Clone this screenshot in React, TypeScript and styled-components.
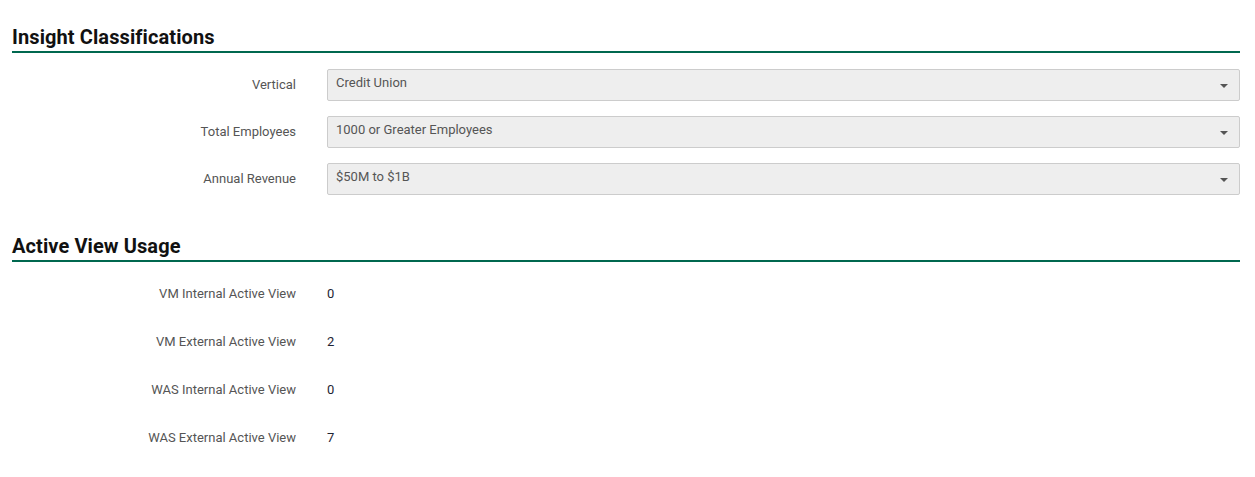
import { Fragment } from 'react';
import styled, { createGlobalStyle } from 'styled-components';

const GlobalStyle = createGlobalStyle`
  body {
    margin: 0;
    background: #fff;
    font-family: Roboto, "Liberation Sans", sans-serif;
  }
`;

const Page = styled.div`
  padding: 27px 15px 0 12px;
`;

const Section = styled.section<{ $gap: number }>`
  margin-bottom: ${(p) => p.$gap}px;
`;

const Heading = styled.h2`
  margin: 0;
  padding-bottom: 3px;
  font-size: 20px;
  line-height: 21px;
  font-weight: 700;
  color: #111;
  letter-spacing: 0.1px;
  border-bottom: 2px solid #00684f;
`;

const FieldGrid = styled.div<{ $top: number; $gap: number }>`
  display: grid;
  grid-template-columns: 284px 1fr;
  column-gap: 31px;
  row-gap: ${(p) => p.$gap}px;
  margin-top: ${(p) => p.$top}px;
  align-items: center;
`;

const Label = styled.div<{ $h: number }>`
  text-align: right;
  font-size: 13px;
  color: #555;
  line-height: ${(p) => p.$h}px;
`;

const Select = styled.div`
  position: relative;
  height: 32px;
  box-sizing: border-box;
  border: 1px solid #ccc;
  border-radius: 2px;
  background: #eee;
  padding: 4px 30px 0 8px;
  font-size: 13px;
  line-height: 17px;
  color: #555;
`;

const Caret = styled.span`
  position: absolute;
  right: 11px;
  top: 14px;
  width: 0;
  height: 0;
  border-left: 4px solid transparent;
  border-right: 4px solid transparent;
  border-top: 4px solid #555;
`;

const Value = styled.div`
  font-size: 13px;
  color: #1e2433;
  line-height: 32px;
`;

const classifications = [
  { label: 'Vertical', value: 'Credit Union' },
  { label: 'Total Employees', value: '1000 or Greater Employees' },
  { label: 'Annual Revenue', value: '$50M to $1B' },
];

const usage = [
  { label: 'VM Internal Active View', value: 0 },
  { label: 'VM External Active View', value: 2 },
  { label: 'WAS Internal Active View', value: 0 },
  { label: 'WAS External Active View', value: 7 },
];

export default function App() {
  return (
    <Page>
      <GlobalStyle />
      <Section $gap={41}>
        <Heading>Insight Classifications</Heading>
        <FieldGrid $top={16} $gap={15}>
          {classifications.map((c) => (
            <Fragment key={c.label}>
              <Label $h={30}>{c.label}</Label>
              <Select>
                {c.value}
                <Caret />
              </Select>
            </Fragment>
          ))}
        </FieldGrid>
      </Section>
      <Section $gap={0}>
        <Heading>Active View Usage</Heading>
        <FieldGrid $top={16} $gap={16}>
          {usage.map((u) => (
            <Fragment key={u.label}>
              <Label $h={32}>{u.label}</Label>
              <Value>{u.value}</Value>
            </Fragment>
          ))}
        </FieldGrid>
      </Section>
    </Page>
  );
}
